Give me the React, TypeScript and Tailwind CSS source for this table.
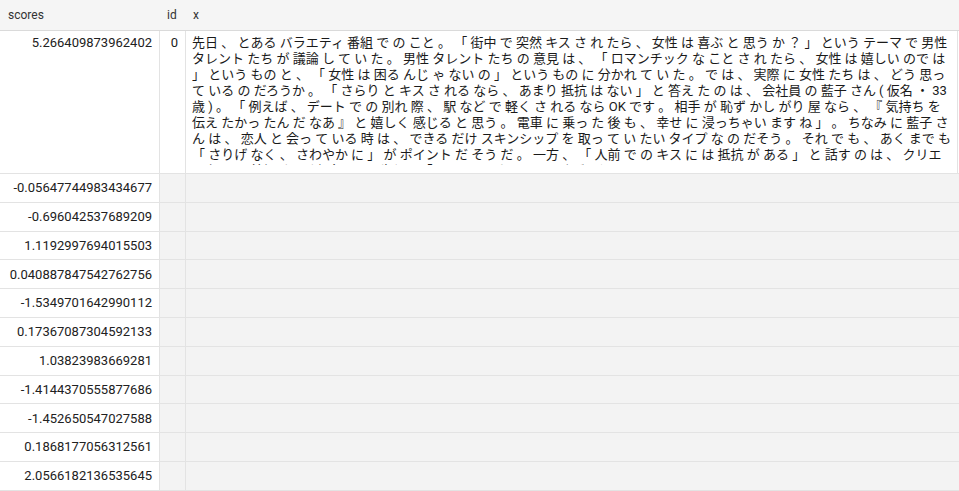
import React from "react";

const text =
  "先日 、 とある バラエティ 番組 で の こと 。 「 街中 で 突然 キス さ れ たら 、 女性 は 喜ぶ と 思う か ？ 」 という テーマ で 男性 タレント たち が 議論 し て い た 。 男性 タレント たち の 意見 は 、 「 ロマンチック な こと さ れ たら 、 女性 は 嬉しい ので は 」 という もの と 、 「 女性 は 困る んじ ゃ ない の 」 という もの に 分かれ て い た 。 で は 、 実際 に 女性 たち は 、 どう 思っ て いる の だろうか 。 「 さらり と キス さ れる なら 、 あまり 抵抗 は ない 」 と 答え た の は 、 会社員 の 藍子 さん ( 仮名 ・ 33 歳 ) 。 「 例えば 、 デート で の 別れ 際 、 駅 など で 軽く さ れる なら OK です 。 相手 が 恥ず かし がり 屋 なら 、 『 気持ち を 伝え たかっ たん だ なあ 』 と 嬉しく 感じる と 思う 。 電車 に 乗っ た 後 も 、 幸せ に 浸っちゃい ます ね 」 。 ちなみ に 藍子 さ ん は 、 恋人 と 会っ て いる 時 は 、 できる だけ スキンシップ を 取っ て い たい タイプ な の だそう 。 それ で も 、 あく まで も 「 さりげ なく 、 さわやか に 」 が ポイント だ そう だ 。 一方 、 「 人前 で の キス に は 抵抗 が ある 」 と 話す の は 、 クリエイター の 美紀 さん ( 仮名 ・ 28 歳 ) 。 「 人 に 見 られる の は 恥ずかしい です 」";

const scores = [
  "-0.05647744983434677",
  "-0.696042537689209",
  "1.1192997694015503",
  "0.040887847542762756",
  "-1.5349701642990112",
  "0.17367087304592133",
  "1.03823983669281",
  "-1.4144370555877686",
  "-1.452650547027588",
  "0.1868177056312561",
  "2.0566182136535645",
];

export default function App() {
  return (
    <div className="w-[959px] h-[491px] overflow-hidden bg-white font-['Roboto','Noto_Sans_CJK_JP',sans-serif] text-[#212121]">
      {/* header */}
      <div className="flex h-[31px] bg-[#f5f5f5] border-b border-[#dadada] text-[12px] text-[#333]">
        <div className="w-[160px] flex items-center px-2">scores</div>
        <div className="w-[26px] flex items-center pl-[7px]">id</div>
        <div className="flex-1 flex items-center pl-[7px]">x</div>
      </div>

      {/* first row */}
      <div className="flex h-[143px] border-b border-[#e3e3e3] text-[13px]">
        <div className="w-[160px] shrink-0 border-r border-[#e3e3e3] text-right pr-[7px] pt-[4px] leading-[16px]">
          5.266409873962402
        </div>
        <div className="w-[26px] shrink-0 border-r border-[#e3e3e3] text-right pr-[7px] pt-[4px] leading-[16px]">
          0
        </div>
        <div className="w-[772px] shrink-0 border-r border-[#e3e3e3] pl-[6px] pr-[4px] pt-[4px] overflow-hidden">
          <div className="h-[130px] overflow-hidden leading-[16px] text-[#1a1a1a]">
            {text}
          </div>
        </div>
      </div>

      {/* other rows */}
      {scores.map((s, i) => (
        <div key={i} className="flex h-[28.8px] border-b border-[#e3e3e3] text-[13px]">
          <div className="w-[160px] shrink-0 border-r border-[#e3e3e3] flex items-center justify-end pr-[7px]">
            {s}
          </div>
          <div className="w-[26px] shrink-0 border-r border-[#e3e3e3] bg-[#f3f3f3]" />
          <div className="flex-1 bg-[#f3f3f3]" />
        </div>
      ))}
    </div>
  );
}
